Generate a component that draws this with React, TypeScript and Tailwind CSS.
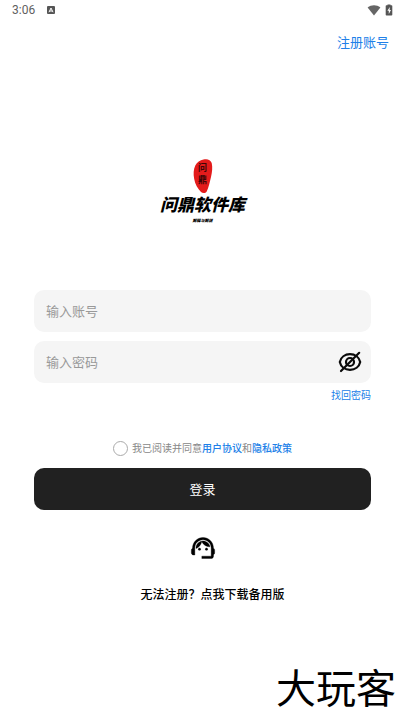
import React, { useState } from 'react';

const StatusBar: React.FC = () => (
  <div className="flex h-5 items-center justify-between pl-3 pr-3 text-[#5f5f5f]">
    <div className="flex items-center gap-3">
      <span className="font-[Roboto,sans-serif] text-xs">3:06</span>
      <svg className="h-2 w-2" viewBox="0 0 8 8" aria-hidden="true">
        <rect width="8" height="8" rx="1" fill="#555" />
        <path d="M2 6.2 4 2l2 4.2M2.8 5h2.4" fill="none" stroke="#fff" strokeWidth="1" />
      </svg>
    </div>
    <div className="flex items-center gap-1">
      <svg className="h-3 w-3.5" viewBox="0 0 14 12" aria-hidden="true">
        <path d="M7 11.5.6 3.4C4.2.6 9.8.6 13.4 3.4Z" fill="#666" />
      </svg>
      <svg className="h-3 w-2" viewBox="0 0 8 12" aria-hidden="true">
        <path d="M2.5 1.2V.4h3v.8h1a.8.8 0 0 1 .8.8v8.8a.8.8 0 0 1-.8.8h-5a.8.8 0 0 1-.8-.8V2a.8.8 0 0 1 .8-.8Z" fill="#555" />
        <path d="M4.800 3 2.400 6.800h1.400V10l2.200-4H4.600Z" fill="#fff" />
      </svg>
    </div>
  </div>
);

const Logo: React.FC = () => (
  <div className="flex flex-col items-center text-black">
    <div className="grid h-9 w-5 place-items-center">
      <svg className="col-start-1 row-start-1 h-9 w-5" viewBox="0 0 20 36" aria-hidden="true">
        <path
          d="M10.5 1.5C14 .5 17.6 1.500 18.700 5c1 4 .5 9-.700 14-1.300 5.500-2.500 11-4.300 14.500-1.300 2-4.200 2-5.700.4C4.800 31 2 26 1.200 21 .2 16 .5 11 2.300 7.500 4 4.200 7 2.300 10.500 1.500Z"
          fill="#e31b1b"
        />
      </svg>
      <span className="z-10 col-start-1 row-start-1 flex flex-col items-center pb-1 text-[9px] font-bold leading-3 text-[#3d0505]">
        <span>问</span>
        <span>鼎</span>
      </span>
    </div>
    <h1 className="text-[17px] font-black italic leading-5">问鼎软件库</h1>
    <p className="mt-1 text-[4px] font-black italic leading-1">解释与解谜</p>
  </div>
);

const EyeOff: React.FC = () => (
  <svg className="h-6 w-6" viewBox="0 0 24 24" fill="none" stroke="#0a0a0a" strokeWidth="2.2" strokeLinecap="round" aria-hidden="true">
    <path d="M1.800 12C2.800 7.200 7 4.200 12 4.200S21.200 7.200 22.200 12C21.200 16.800 17 19.800 12 19.800S2.800 16.800 1.800 12Z" />
    <circle cx="12" cy="12" r="4" />
    <path d="M3 21 21.200 2.800" />
  </svg>
);

const Agent: React.FC = () => (
  <svg className="h-7 w-7" viewBox="0 0 24 24" stroke="#000" strokeWidth=".3" aria-hidden="true">
    <path d="M21 12.200C21 6.700 16.700 3 12 3c-4.700 0-9 3.800-9 9.300-.6.300-1 1-1 1.700v2c0 1.100.9 2 2 2h1v-6.100c0-3.900 3.100-7 7-7s7 3.100 7 7V19h-8v2h8c1.100 0 2-.9 2-2v-1.200c.6-.3 1-.9 1-1.600v-2.300c0-.7-.4-1.300-1-1.700Z" />
    <circle cx="9" cy="13" r="1" />
    <circle cx="15" cy="13" r="1" />
    <path d="M18 11c-.5-2.900-3-5-6-5-3 0-6.300 2.500-6 6.500 2.500-1 4.300-3.200 4.900-5.900C12.200 9.200 14.900 11 18 11Z" />
  </svg>
);

const App: React.FC = () => {
  const [showPassword, setShowPassword] = useState(false);

  return (
    <div className="flex min-h-screen flex-col bg-white font-['Noto_Sans_CJK_SC',sans-serif]">
      <StatusBar />
      <header className="flex justify-end px-4 pt-3">
        <a href="#register" className="text-[13px] leading-5 text-[#2080e8]">注册账号</a>
      </header>

      <main className="flex flex-col px-[34px] pt-[106px]">
        <Logo />

        <form className="flex flex-col pt-[68px]" onSubmit={(e) => e.preventDefault()}>
          <input
            type="text"
            aria-label="账号"
            placeholder="输入账号"
            className="h-[42px] rounded-[10px] bg-[#f5f5f5] px-3 pb-0.5 text-[13px] outline-none placeholder:text-[#999]"
          />
          <div className="mt-[9px] flex h-[42px] items-center rounded-[10px] bg-[#f5f5f5] pl-3 pr-[9px]">
            <input
              type={showPassword ? 'text' : 'password'}
              aria-label="密码"
              placeholder="输入密码"
              className="min-w-0 flex-1 bg-transparent text-[13px] outline-none placeholder:text-[#999]"
            />
            <button type="button" aria-label="显示密码" onClick={() => setShowPassword(!showPassword)}>
              <EyeOff />
            </button>
          </div>
          <a href="#recover" className="mt-1 self-end text-[10px] leading-4 text-[#2080e8]">找回密码</a>

          <div className="mt-[37px] flex items-center justify-center gap-1 text-[10px] leading-4 text-[#888]">
            <input
              id="agree"
              type="checkbox"
              className="h-[15px] w-[15px] appearance-none rounded-full border border-[#aaa] checked:bg-[#2080e8]"
            />
            <p>
              <label htmlFor="agree">我已阅读并同意</label>
              <a href="#terms" className="font-medium text-[#2080e8]">用户协议</a>和
              <a href="#privacy" className="font-medium text-[#2080e8]">隐私政策</a>
            </p>
          </div>

          <button type="submit" className="mt-3 h-[42px] rounded-[10px] bg-[#212121] text-[13px] text-white">
            登录
          </button>
        </form>

        <button type="button" aria-label="客服" className="mt-6 self-center">
          <Agent />
        </button>
        <a href="#backup" className="mt-[22px] pl-5 text-center text-xs font-medium leading-5 text-black">
          无法注册？点我下载备用版
        </a>
      </main>

      <div className="mt-auto self-end pr-[9px] pb-2 text-[40px] leading-[52px] text-black">大玩客</div>
    </div>
  );
};

export default App;
